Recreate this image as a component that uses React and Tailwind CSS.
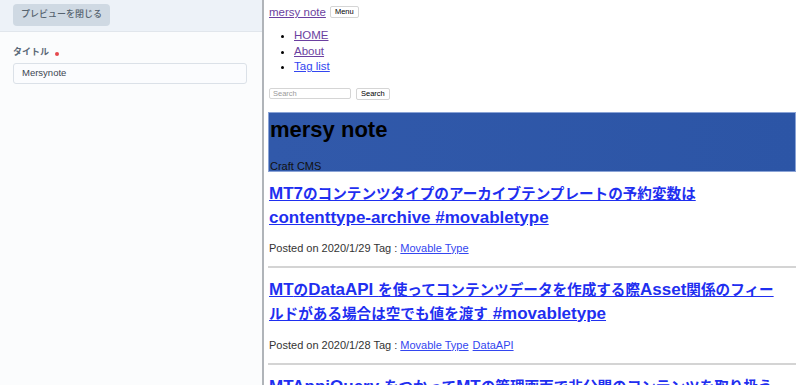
import React from "react";

const jp = { fontFamily: '"Liberation Sans", "Noto Sans CJK JP", sans-serif' };

const posts = [
    {
        title: "MT7のコンテンツタイプのアーカイブテンプレートの予約変数は contenttype-archive #movabletype",
        date: "2020/1/29",
        tags: ["Movable Type"],
    },
    {
        title: "MTのDataAPI を使ってコンテンツデータを作成する際Asset関係のフィールドがある場合は空でも値を渡す #movabletype",
        date: "2020/1/28",
        tags: ["Movable Type", "DataAPI"],
    },
    {
        title: "MTAppjQuery をつかってMTの管理画面で非公開のコンテンツを取り扱う方法 #movabletype",
        date: "2020/1/27",
        tags: ["Movable Type"],
    },
];

// japanese runs render a little smaller than the latin ones in the reference
const Mixed = ({ text }) =>
    text.split(/([\u3000-\u9fff\uff00-\uffef]+)/).map((part, i) =>
        /[\u3000-\u9fff\uff00-\uffef]/.test(part) ? (
            <span key={i} className="text-[14.6px]">{part}</span>
        ) : (
            <React.Fragment key={i}>{part}</React.Fragment>
        )
    );

const Editor = () => (
    <div className="flex h-full w-[262px] shrink-0 flex-col bg-[#fbfcfd]">
        {/* top bar with close preview */}
        <div className="flex h-[32px] items-start border-b border-[#e1e6ec] bg-[#edf2f8] pl-[13px] pt-[4px]">
            <button className="h-[22px] w-[97px] rounded-[4px] bg-[#cfd9e3] text-[9px] font-medium text-[#56636f]">
                プレビューを閉じる
            </button>
        </div>
        <div className="px-[13px] pt-[14px]">
            <div className="flex h-[14px] items-center text-[9px] font-bold text-[#5c6978]">
                タイトル
                <span className="ml-[6px] mt-[1px] h-[4px] w-[4px] rounded-full bg-[#e5484d]"></span>
            </div>
            <div className="mt-[3px] flex h-[21px] w-[234px] items-center rounded-[3px] border border-[#dbe1e8] bg-[#fbfcfe] px-[8px] text-[9.5px] text-[#3b4652]">
                Mersynote
            </div>
        </div>
    </div>
);

const Preview = () => (
    <div className="h-full flex-1 overflow-hidden bg-white px-[4px]" style={jp}>
        {/* site nav */}
        <div className="flex items-center pl-[1px] pt-[5px]">
            <a className="text-[11.5px] leading-[14px] text-[#6b3fa0] underline">mersy note</a>
            <button className="ml-[4px] h-[12px] rounded-[2px] border border-[#d5d5d5] bg-white px-[4px] text-[7.5px] leading-[10px] text-black">
                Menu
            </button>
        </div>
        <ul className="mt-[9px] list-disc pl-[26px] text-[11.5px] leading-[15.5px]">
            <li><a className="text-[#6b3fa0] underline">HOME</a></li>
            <li><a className="text-[#6b3fa0] underline">About</a></li>
            <li><a className="text-[#3346f0] underline">Tag list</a></li>
        </ul>
        <div className="mt-[13px] flex items-center pl-[1px]">
            <input
                className="h-[11px] w-[82px] rounded-[2px] border border-[#d5d5d5] px-[3px] text-[7.5px] outline-none placeholder:text-[#9a9a9a]"
                placeholder="Search"
            />
            <button className="ml-[5px] h-[12px] rounded-[2px] border border-[#d5d5d5] bg-white px-[4px] text-[7.5px] leading-[10px] text-black">
                Search
            </button>
        </div>
        {/* site header */}
        <div className="mt-[12px] h-[60px] border border-[#8aa3d6] bg-gradient-to-r from-[#3159aa] to-[#2c55a6] px-px">
            <div className="pt-[4px] text-[22px] font-bold leading-[26px] text-black">mersy note</div>
            <div className="mt-[17px] text-[11px] leading-[12px] text-[#111]">Craft CMS</div>
        </div>
        {/* posts */}
        <div className="pl-px">
            {posts.map((post, i) => (
                <div key={i} className="pt-[10px]">
                    <h2 className="max-w-[518px] text-[17px] font-bold leading-[23px]">
                        <a className="text-[#1f2ff0] underline"><Mixed text={post.title} /></a>
                    </h2>
                    <p className="mt-[12px] text-[11px] leading-[14px] text-[#333]">
                        Posted on {post.date} Tag :{" "}
                        {post.tags.map((t) => (
                            <a key={t} className="mr-[4px] text-[#3346f0] underline">{t}</a>
                        ))}
                    </p>
                    <hr className="-ml-px mt-[11px] border-t-2 border-[#d4d4d4]" />
                </div>
            ))}
        </div>
    </div>
);

const App = () => {
    return (
        <div className="flex h-[385px] w-[800px] overflow-hidden" style={jp}>
            <Editor />
            <div className="w-[2px] shrink-0 bg-[#b0b4b9]"></div>
            <Preview />
        </div>
    );
};

export default App;
